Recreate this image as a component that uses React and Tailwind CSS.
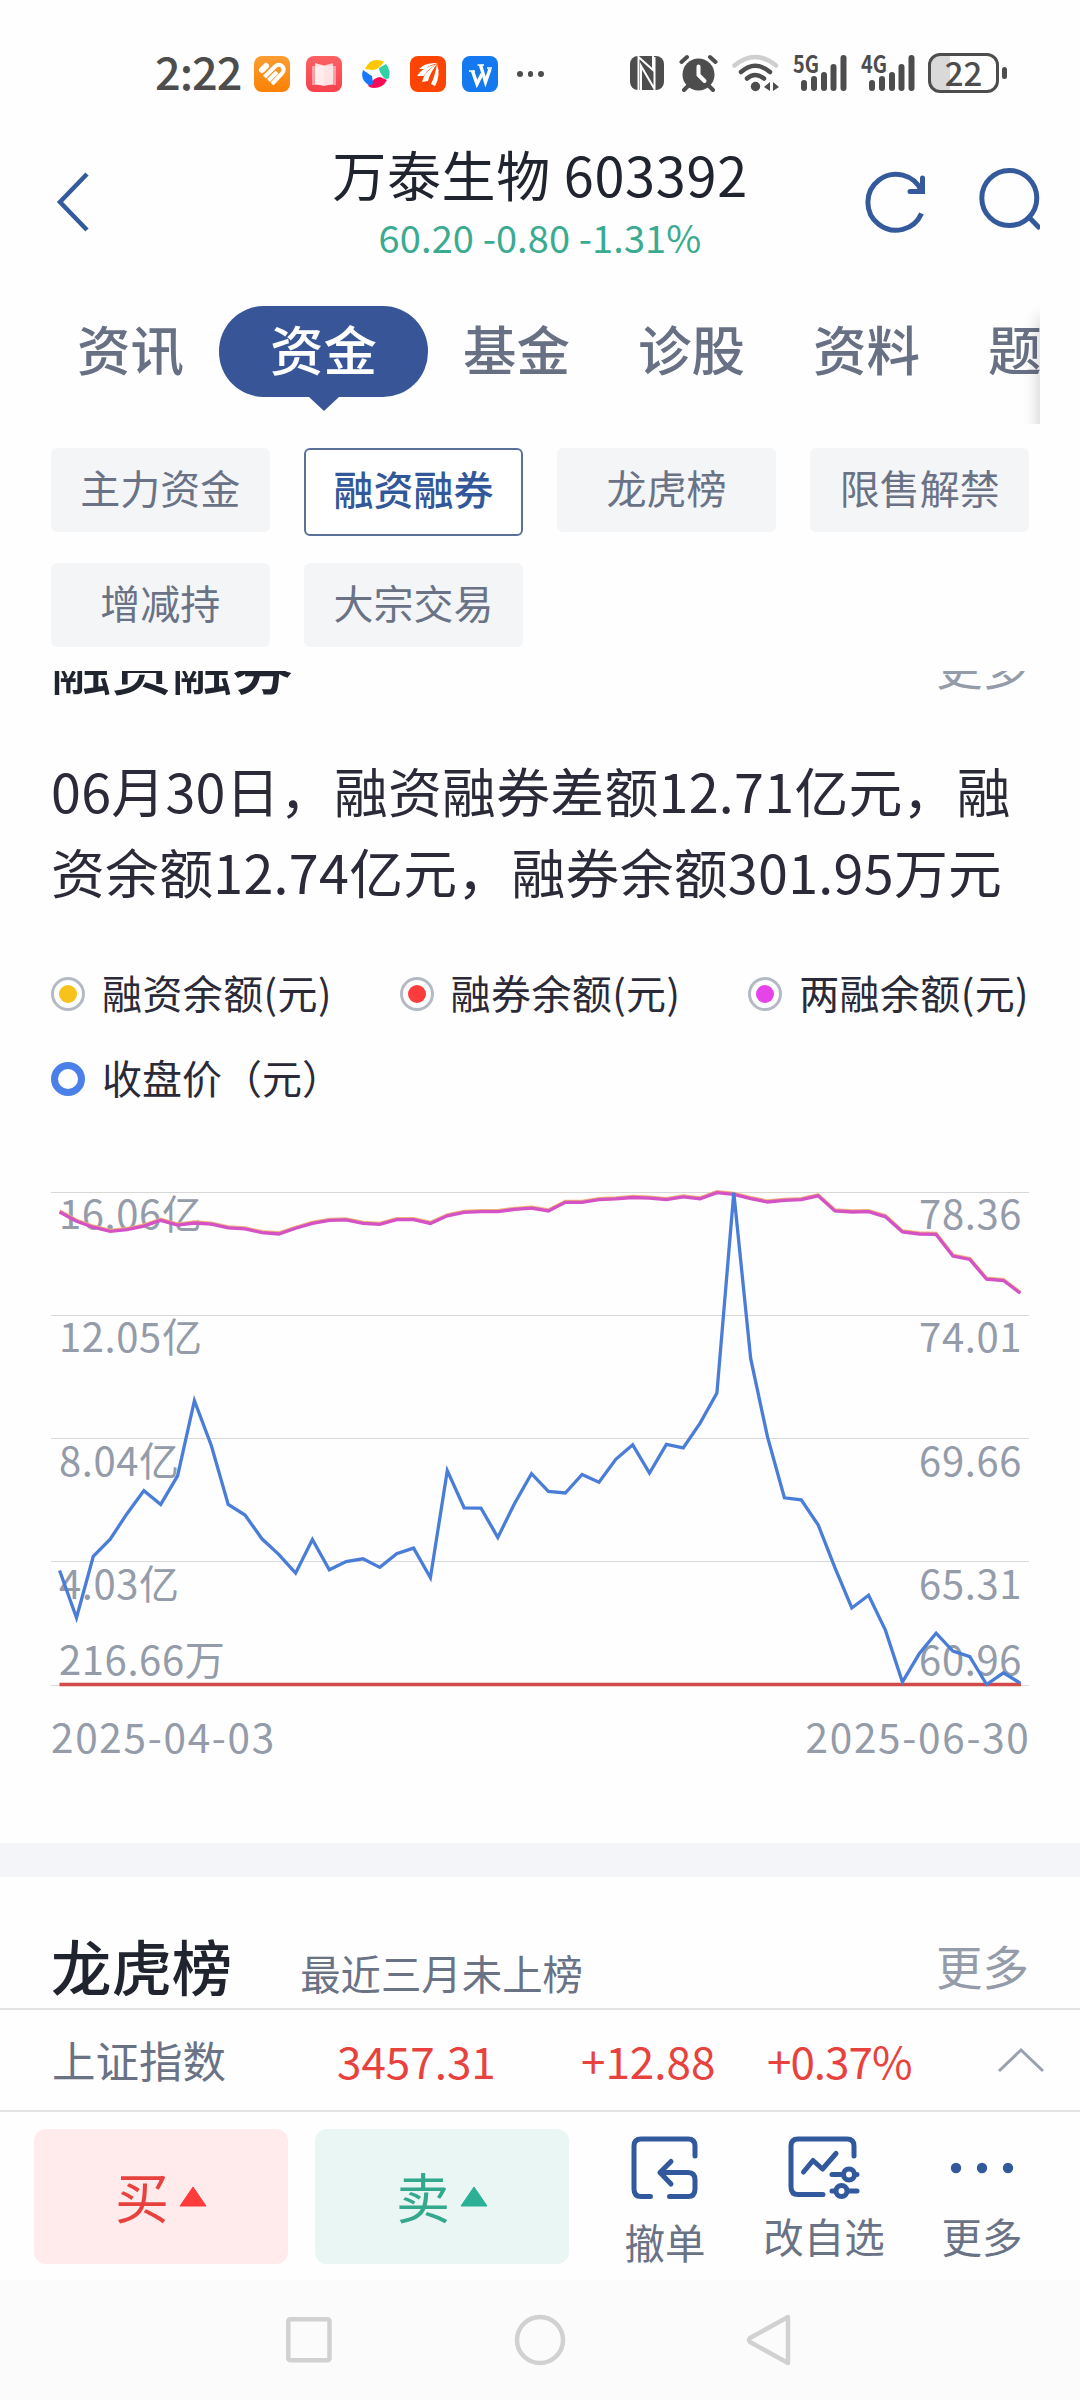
import React from "react";

const CLOSE = [
  1163, 1300, 1122, 1072, 998, 931, 971, 888, 670, 800, 971, 1002, 1071, 1116,
  1171, 1073, 1161, 1137, 1129, 1154, 1114, 1098, 1184, 873, 981, 982, 1067,
  968, 882, 933, 938, 884, 907, 840, 798, 880, 797, 807, 735, 648, 66, 548,
  775, 952, 958, 1030, 1155, 1272, 1235, 1337, 1487, 1405, 1345, 1397, 1413,
  1494, 1460, 1490,
];

const BALANCE = [
  122, 149, 166, 178, 173, 163, 146, 160, 154, 157, 168, 171, 182, 186, 169,
  155, 146, 145, 155, 158, 144, 144, 155, 133, 123, 121, 121, 114, 111, 119,
  94, 94, 86, 84, 80, 82, 86, 78, 84, 66, 71, 83, 93, 88, 86, 75, 119, 122,
  121, 136, 180, 186, 187, 250, 260, 317, 321, 358,
];

// series values are stored in chart units, 2.904 per pixel
const toPoints = (series, shift = 0) =>
  series
    .map((v, i) => `${(8.6 + i * 16.855).toFixed(1)},${(v / 2.904 + shift).toFixed(1)}`)
    .join(" ");

const gridLines = [22.5, 145.5, 268.5, 391.5, 515.5];

const axisLabels = [
  { y: 59, left: "16.06亿", right: "78.36" },
  { y: 182, left: "12.05亿", right: "74.01" },
  { y: 305.5, left: "8.04亿", right: "69.66" },
  { y: 428.5, left: "4.03亿", right: "65.31" },
  { y: 505, left: "216.66万", right: "60.96" },
];

const chips = ["主力资金", "融资融券", "龙虎榜", "限售解禁", "增减持", "大宗交易"];

function Signal({ label }) {
  return (
    <svg width="56" height="40" viewBox="0 0 56 40" fill="#4d4d4d">
      <text
        x="0"
        y="19.500"
        fontSize="24"
        fontWeight="700"
        textLength="26"
        lengthAdjust="spacingAndGlyphs"
      >
        {label}
      </text>
      <rect x="8" y="27" width="6" height="11" rx="3" />
      <rect x="18" y="23" width="6" height="15" rx="3" />
      <rect x="28" y="19" width="6" height="19" rx="3" />
      <rect x="37.5" y="11" width="6" height="27" rx="3" />
      <rect x="47.5" y="2" width="6" height="36" rx="3" />
    </svg>
  );
}

function StatusBar() {
  return (
    <div className="flex h-[130px] items-start pl-[155px] pt-[53px] text-[#4d4d4d]">
      <span className="mt-[-2px] w-[99px] text-[45px] font-medium leading-[40px] tracking-[-1px]">
        2:22
      </span>

      <div className="flex items-center gap-4 pt-[3px]">
        <svg width="36" height="36" viewBox="0 0 36 36">
          <defs>
            <linearGradient id="orange" x1="0" y1="0" x2="0" y2="1">
              <stop offset="0" stopColor="#fb9d33" />
              <stop offset="1" stopColor="#fc8104" />
            </linearGradient>
            <linearGradient id="pink" x1="0" y1="0" x2="0" y2="1">
              <stop offset="0" stopColor="#fb6163" />
              <stop offset="1" stopColor="#f7414f" />
            </linearGradient>
          </defs>
          <rect width="36" height="36" rx="8" fill="url(#orange)" />
          <g fill="none" stroke="#fff" strokeWidth="4">
            <path d="M8 14L12 10" strokeWidth="6" strokeLinecap="round" />
            <path d="M10.500 21L21 10.500Q25 7 28.500 10.500Q31 14 28 17.500L18 28" />
            <path d="M14.500 24.500L23 16" />
          </g>
        </svg>
        <svg width="36" height="36" viewBox="0 0 36 36">
          <rect width="36" height="36" rx="8" fill="url(#pink)" />
          <path d="M6 10H30V29H6Z" fill="#fff" opacity="0.45" />
          <path d="M9 7L18 9.500V30L9 28Z" fill="#fff" opacity="0.8" />
          <path d="M27 7L18 9.500V30L27 28Z" fill="#fff" opacity="0.7" />
        </svg>
        <svg width="36" height="36" viewBox="0 0 36 36">
          <path d="M7 13Q11 4 18.500 4Q24 4 26 6Q20 14 15 14Z" fill="#fdc800" />
          <path d="M28 8Q33 14 31 22Q28 24 26 22Q21 16 21 12Z" fill="#35d0a5" />
          <path d="M29 24Q25 32 16 32Q11 32 10 29Q17 21 22 21Z" fill="#fb0a55" />
          <path d="M5 14Q2 22 9 28Q14 31 15 27L14 20Q8 16 5 14Z" fill="#1677ff" />
        </svg>
        <svg width="36" height="36" viewBox="0 0 36 36">
          <rect width="36" height="36" rx="8" fill="#fd4503" />
          <g fill="#fff">
            <path d="M9 13Q15 6 28 7Q19 9 15 13Z" />
            <path d="M7 20Q11 12 27 8Q18 13 14 20Z" />
            <path d="M12 26Q14 16 27 8Q20 17 18 25Z" />
            <path d="M21 28Q25 20 27 8Q31 19 25 30Z" />
          </g>
        </svg>
        <svg width="36" height="36" viewBox="0 0 36 36">
          <rect width="36" height="36" rx="8" fill="#1478ee" />
          <g fill="none" stroke="#fff">
            <path d="M10.500 15L15 28L20 18" strokeWidth="3.400" />
            <path d="M18.500 9L23.500 26L28 13" strokeWidth="3.400" />
            <path d="M7 15H13M15.500 9H22M25 12H30" strokeWidth="1.500" />
          </g>
        </svg>
      </div>

      <div className="flex items-center gap-[5px] pl-[19px] pt-[18px]">
        <i className="size-[5.5px] rounded-full bg-[#4d4d4d]" />
        <i className="size-[5.5px] rounded-full bg-[#4d4d4d]" />
        <i className="size-[5.5px] rounded-full bg-[#4d4d4d]" />
      </div>

      <div className="ml-auto flex pr-[73px]">
        {/* nfc */}
        <svg className="mr-[15px] mt-[3px]" width="34" height="34" viewBox="0 0 34 34">
          <rect width="34" height="34" rx="8" fill="#4d4d4d" />
          <path
            d="M8.500 34V1L23 14V0M11 34V10L24.500 33V1"
            fill="none"
            stroke="#fff"
            strokeWidth="2"
          />
        </svg>
        {/* alarm */}
        <svg className="mr-[14px] mt-[1px]" width="39" height="38" viewBox="0 0 39 38">
          <circle cx="19.500" cy="20.500" r="16" fill="#4d4d4d" />
          <g fill="none" strokeLinecap="round">
            <path
              d="M2.500 8L8 3M36.500 8L31 3M9 32L5 36M30 32L34 36"
              stroke="#4d4d4d"
              strokeWidth="4"
            />
            <path d="M19.500 12.500V21L25.500 27" stroke="#fff" strokeWidth="4" />
          </g>
        </svg>
        {/* wifi */}
        <svg className="mr-[14px]" width="47" height="39" viewBox="0 0 47 39">
          <g fill="none" strokeLinecap="round" strokeWidth="4.500">
            <path d="M2.500 12.500Q23 -4.500 44 12.500" stroke="#cfcfcf" />
            <path d="M9 19Q23 6.500 38 19" stroke="#4d4d4d" />
            <path d="M15 25.500Q23 18.500 32 25.500" stroke="#4d4d4d" />
          </g>
          <circle cx="23.500" cy="33.500" r="4.700" fill="#4d4d4d" />
          <path d="M32 34L38 29V38Z M41 29L47 34L41 38Z" fill="#4d4d4d" />
        </svg>
        <Signal label="5G" />
        <div className="w-3" />
        <Signal label="4G" />
        <div className="w-[11px]" />
        {/* battery */}
        <div className="flex h-[40px] w-[71px] items-center rounded-xl border-[3px] border-[#4d4d4d] bg-linear-to-r from-[#d9d9d9] from-30% to-white to-30%">
          <span className="mt-[-3px] w-full text-center text-[33px] font-medium leading-[34px]">
            22
          </span>
        </div>
        <i className="ml-[3px] mt-[14px] h-3 w-[5px] rounded-full bg-[#4d4d4d]" />
      </div>
    </div>
  );
}

function Header() {
  return (
    <div className="flex h-[160px] w-[1040px] justify-between overflow-hidden">
      <svg className="ml-[54px] mt-[40px] shrink-0" width="120" height="64" viewBox="0 0 120 64">
        <path d="M33 4L6 32L33 60" fill="none" stroke="#355a9c" strokeWidth="4.500" />
      </svg>
      <div className="ml-[46px] flex flex-col items-center whitespace-nowrap">
        <h1 className="mt-[6px] text-[54px] leading-[76px] tracking-[0.7px] text-[#20242f]">
          万泰生物 603392
        </h1>
        <p className="mt-[1px] text-[38px] leading-[48px] tracking-[0.1px] text-[#3aab90]">
          60.20 -0.80 -1.31%
        </p>
      </div>
      <svg className="mt-[34px] shrink-0" width="180" height="72" viewBox="0 0 180 72">
        <g fill="none" stroke="#355a9c" strokeWidth="5">
          <path d="M61.500 49.500A28 28 0 1 1 61.500 27" />
          <path d="M62.500 14V27.500H50" strokeLinecap="round" />
          <circle cx="149.300" cy="34" r="27.500" />
          <path d="M169 53.300L178.500 63" strokeLinecap="round" />
        </g>
      </svg>
    </div>
  );
}

function Tabs() {
  return (
    <div className="relative flex h-[134px] w-[1040px] overflow-hidden whitespace-nowrap text-[53.5px] leading-[83px] text-[#687084]">
      <div className="flex shrink-0 pl-[77px] pt-[16px] font-medium">
        <span>资讯</span>
        <div className="ml-[35px] mr-[1px] flex flex-col items-center">
          <div className="h-[91px] w-[209px] rounded-[45px] bg-[#375597] text-center text-white">
            资金
          </div>
          <svg width="30" height="15" viewBox="0 0 30 15">
            <path d="M0 0H30L15 14Z" fill="#375597" />
          </svg>
        </div>
        <span className="px-[34px]">基金</span>
        <span className="px-[34px]">诊股</span>
        <span className="px-[34px]">资料</span>
        <span className="px-[34px]">题材</span>
      </div>
      {/* edge shadow, more tabs to the right */}
      <div className="absolute -bottom-5 -right-2 top-[28px] w-2 shadow-[0_0_16px_rgba(0,0,0,0.3)]" />
    </div>
  );
}

function Legend({ color, label }) {
  return (
    <div className="flex items-center gap-[17px]">
      <div className="flex size-[34px] items-center justify-center rounded-full border-[3px] border-[#b4bac4]">
        <i className="size-[18px] rounded-full" style={{ background: color }} />
      </div>
      <span className="mt-[-4px]">{label}</span>
    </div>
  );
}

function Chart() {
  return (
    <svg className="block" width="978" height="520" viewBox="0 0 978 520">
      {gridLines.map((y) => (
        <path key={y} d={`M0 ${y}H978`} stroke="#d8d8d8" />
      ))}
      <g fill="#949ba9" fontSize="40" letterSpacing="0.6">
        {axisLabels.map((l) => (
          <g key={l.y}>
            <text x="8" y={l.y}>
              {l.left}
            </text>
            <text x="971" y={l.y} textAnchor="end">
              {l.right}
            </text>
          </g>
        ))}
      </g>
      <g fill="none" strokeWidth="3.3">
        <polyline points={toPoints(BALANCE, -1)} stroke="#f0b07a" />
        <polyline points={toPoints(BALANCE)} stroke="#d452c4" />
        <path d="M8.500 514.500H970" stroke="#d24a4a" />
        <polyline points={toPoints(CLOSE)} stroke="#4a7dd8" />
      </g>
    </svg>
  );
}

function BottomBar() {
  return (
    <div className="flex h-[168px] pl-[34px] pt-[17px] text-[40.5px] leading-[56px] text-[#6a7286]">
      <button className="flex h-[135px] w-[254px] items-center justify-center gap-[10px] rounded-xl bg-[#ffebeb] text-[54px] text-[#e8423f]">
        <span className="mt-[-1px]">买</span>
        <svg width="28" height="21" viewBox="0 0 28 21">
          <path d="M14 1L27 20H1Z" fill="#ff3b3b" stroke="#ff3b3b" strokeLinejoin="round" />
        </svg>
      </button>
      <button className="ml-[27px] flex h-[135px] w-[254px] items-center justify-center gap-[10px] rounded-xl bg-[#e9f6f4] text-[54px] text-[#34a88d]">
        <span className="mt-[-1px]">卖</span>
        <svg width="28" height="21" viewBox="0 0 28 21">
          <path d="M14 1L27 20H1Z" fill="#2bb096" stroke="#2bb096" strokeLinejoin="round" />
        </svg>
      </button>

      <div className="ml-[55px] flex w-[82px] flex-col items-center pt-[7px]">
        <svg width="68" height="66" viewBox="0 0 68 66">
          <g
            fill="none"
            stroke="#33599d"
            strokeWidth="5"
            strokeLinecap="round"
            strokeLinejoin="round"
          >
            <path d="M64 20V10Q64 3 57 3H10Q3 3 3 10V53Q3 60.500 10 60.500H19.500" />
            <path d="M38.500 60.500H57Q64 60.500 64 53V44Q64 36.500 57 36.500H29M40 25.500L29 36.500L40 48" />
          </g>
        </svg>
        <span className="mt-[12px]">撤单</span>
      </div>

      <div className="ml-[57px] flex w-[122px] flex-col items-center pt-[7px]">
        <svg width="74" height="66" viewBox="0 0 74 66">
          <g
            fill="none"
            stroke="#33599d"
            strokeWidth="5"
            strokeLinecap="round"
            strokeLinejoin="round"
          >
            <path d="M67 20V10Q67 3 60 3H11Q4 3 4 10V51Q4 58.500 11 58.500H36" />
            <path d="M16.500 36L26 24.500L35.500 33L49 17.500" />
            <path d="M45 38.500H54M68 38.500H70M45 55H47M61 55H70" />
            <circle cx="62" cy="38.500" r="5.500" />
            <circle cx="54.500" cy="55" r="5.500" />
          </g>
        </svg>
        <span className="mt-[6px]">改自选</span>
      </div>

      <div className="ml-[52px] flex w-[90px] flex-col items-center pt-[7px]">
        <svg width="68" height="66" viewBox="0 0 68 66" fill="#33599d">
          <circle cx="8" cy="32" r="5.200" />
          <circle cx="34" cy="32" r="5.200" />
          <circle cx="60" cy="32" r="5.200" />
        </svg>
        <span className="mt-[6px]">更多</span>
      </div>
    </div>
  );
}

export default function App() {
  return (
    <div className="h-[2400px] w-[1080px] overflow-hidden bg-[#fefefe] font-['Noto_Sans_CJK_SC',sans-serif]">
      <StatusBar />
      <Header />
      <Tabs />

      <div className="grid h-[247px] grid-cols-4 content-start items-start gap-x-[34.6px] gap-y-[27px] px-[51px] pt-[24px] text-center text-[40px] text-[#6a7286]">
        {chips.map((chip) => (
          <div
            key={chip}
            className={
              chip === "融资融券"
                ? "h-[88px] rounded-md border-2 border-[#5a7098] bg-white font-medium leading-[77px] text-[#33589a]"
                : "h-[84px] rounded-md bg-[#f4f5f7] leading-[79px]"
            }
          >
            {chip}
          </div>
        ))}
      </div>

      {/* section scrolled under the chips */}
      <div className="flex h-[60px] items-start justify-between overflow-hidden px-[51px]">
        <h2 className="mt-[-50px] text-[60.4px] font-medium leading-[86px] text-[#20242f]">
          融资融券
        </h2>
        <span className="mt-[-39px] text-[46.5px] leading-[66px] text-[#949ba9]">更多</span>
      </div>

      <div className="px-[51px]">
        <p className="mt-[18px] whitespace-nowrap text-[53.8px] leading-[81px] tracking-[0.3px] text-[#2a2a38]">
          06月30日，融资融券差额12.71亿元，融
          <br />
          资余额12.74亿元，融券余额301.95万元
        </p>

        <div className="mt-[53px] flex h-[60px] justify-between whitespace-nowrap text-[40px] leading-[60px] tracking-[0.4px] text-[#2a2a38]">
          <Legend color="#f8c21c" label="融资余额(元)" />
          <Legend color="#fb3c3c" label="融券余额(元)" />
          <Legend color="#e545e8" label="两融余额(元)" />
        </div>
        <div className="mt-[25px] flex h-[60px] items-center gap-[17px] text-[40px] leading-[60px] text-[#2a2a38]">
          <i className="size-[34px] rounded-full border-[7px] border-[#4a80e8]" />
          <span className="mt-[-4px]">收盘价（元）</span>
        </div>

        <div className="mt-[61px]">
          <Chart />
        </div>

        <div className="mt-[16px] flex justify-between text-[40.5px] leading-[60px] tracking-[1.7px] text-[#949ba9]">
          <span>2025-04-03</span>
          <span className="mr-[-1.5px]">2025-06-30</span>
        </div>
      </div>

      <div className="mt-[77px] h-[34px] bg-[#f3f5f8]" />

      <div className="flex h-[133px] items-start border-b-2 border-[#e2e3e5] px-[51px]">
        <h2 className="mt-[45px] text-[60.4px] font-medium leading-[86px] text-[#20242f]">
          龙虎榜
        </h2>
        <span className="ml-[68px] mt-[66px] text-[40.4px] leading-[60px] text-[#6a7286]">
          最近三月未上榜
        </span>
        <span className="ml-auto mt-[55px] text-[46.5px] leading-[66px] text-[#949ba9]">更多</span>
      </div>

      <div className="flex h-[102px] items-center border-b-2 border-[#e2e3e5] pl-[52px] text-[44px] text-[#e8423f]">
        <span className="w-[285px] text-[43.5px] text-[#6a7286]">上证指数</span>
        <span className="w-[244px]">3457.31</span>
        <span className="w-[186px]">+12.88</span>
        <span className="w-[229px] tracking-[-1px]">+0.37%</span>
        <svg width="50" height="28" viewBox="0 0 50 28">
          <path d="M3 25L25 4L47 25" fill="none" stroke="#9aa1ae" strokeWidth="3" />
        </svg>
      </div>

      <BottomBar />

      <div className="h-[120px] bg-[#fbfbfb] pl-[284px] pt-[33px]">
        <svg width="520" height="54" viewBox="0 0 520 54">
          <g fill="none" stroke="#d1d1d1" strokeWidth="4.500" strokeLinejoin="round">
            <rect x="4.300" y="6.300" width="41.200" height="41" rx="2" />
            <circle cx="256" cy="27" r="23" />
            <path d="M504 4V50L466 29Q464 27 466 25Z" />
          </g>
        </svg>
      </div>
    </div>
  );
}
